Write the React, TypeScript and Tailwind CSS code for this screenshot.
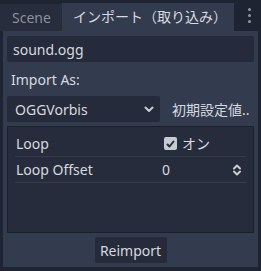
import React from 'react';

const font = { fontFamily: '"Noto Sans", "Noto Sans CJK JP", sans-serif' };

function SpinIcon() {
  return (
    <svg width="10" height="14" viewBox="0 0 10 14" fill="none" stroke="#c9ccd3" strokeWidth="2" strokeLinecap="round" strokeLinejoin="round">
      <path d="M2 5.5L5 2.5L8 5.5" />
      <path d="M2 8.5L5 11.5L8 8.5" />
    </svg>
  );
}

export default function App() {
  return (
    <div className="w-[261px] h-[271px] bg-[#1f2432] flex flex-col text-[14px] text-[#d6d9df] overflow-hidden" style={font}>
      {/* tabs */}
      <div className="h-[31px] flex items-end shrink-0">
        <div className="w-[62px] h-[27px] bg-[#272d3c] flex items-center pl-[12px] text-[#8b909c]">Scene</div>
        <div className="w-[172px] h-[28px] bg-[#333b4f] flex items-center pl-[11px] pb-[1px]">インポート（取り込み）</div>
        <div className="flex-1 h-full flex flex-col items-center justify-center gap-[3px] pl-[4px]">
          <span className="w-[3px] h-[3px] rounded-full bg-[#9095a0]" />
          <span className="w-[3px] h-[3px] rounded-full bg-[#9095a0]" />
          <span className="w-[3px] h-[3px] rounded-full bg-[#9095a0]" />
        </div>
      </div>

      {/* panel */}
      <div className="mx-[3px] h-[236px] bg-[#333b4f] px-[4px] flex flex-col">
        <div className="mt-[5px] h-[26px] bg-[#252b3a] rounded-[2px] flex items-center pl-[6px]">sound.ogg</div>
        <div className="h-[34px] flex items-center pl-[4px]">Import As:</div>
        <div className="h-[26px] flex items-center">
          <div className="w-[153px] h-full bg-[#252b3a] rounded-[2px] flex items-center justify-between pl-[8px] pr-[6px]">
            <span>OGGVorbis</span>
            <svg width="10" height="8" viewBox="0 0 10 8" fill="none" stroke="#c9ccd3" strokeWidth="2" strokeLinecap="round" strokeLinejoin="round">
              <path d="M1.5 2.5L5 6L8.5 2.5" />
            </svg>
          </div>
          <span className="ml-[12px]">初期設定値..</span>
        </div>

        <div className="mt-[4px] h-[107px] bg-[#262c3b] border border-[#1c202b] px-[7px] pt-[4px]">
          <div className="h-[26px] flex items-center border-b border-[#343b4c]">
            <span className="w-[149px] pl-[1px]">Loop</span>
            <span className="w-[13px] h-[13px] rounded-[2px] bg-[#c6cad2] flex items-center justify-center">
              <svg width="9" height="8" viewBox="0 0 9 8" fill="none" stroke="#262c3b" strokeWidth="2" strokeLinecap="round" strokeLinejoin="round">
                <path d="M1.5 4.5L3.5 6.5L7.5 1.5" />
              </svg>
            </span>
            <span className="ml-[5px]">オン</span>
          </div>
          <div className="h-[26px] flex items-center border-b border-[#343b4c]">
            <span className="w-[147px] pl-[1px]">Loop Offset</span>
            <span className="flex-1">0</span>
            <span className="pr-[4px] flex items-center"><SpinIcon /></span>
          </div>
        </div>

        <div className="mt-[4px] flex justify-center">
          <div className="w-[72px] h-[26px] bg-[#252b3a] rounded-[2px] flex items-center justify-center">Reimport</div>
        </div>
      </div>
    </div>
  );
}
